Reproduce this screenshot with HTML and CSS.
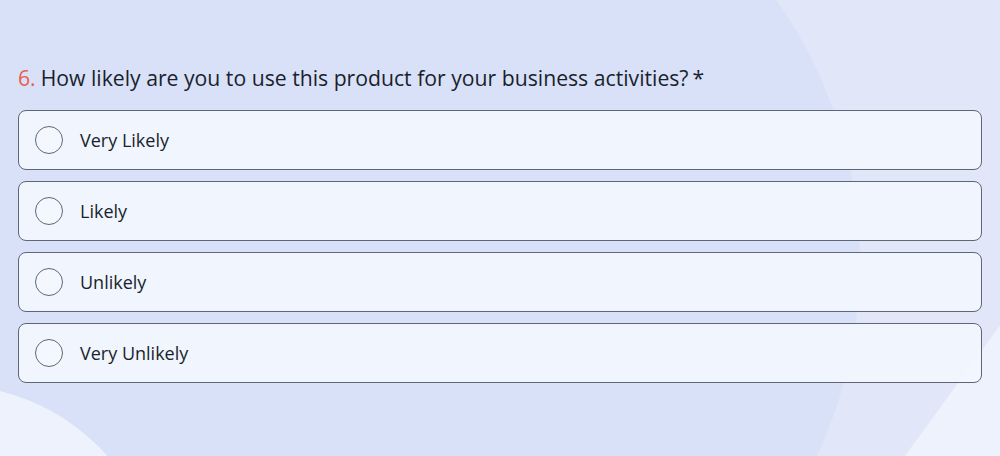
FILE: index.html
```html
<!DOCTYPE html>
<html lang="en">
<head>
    <meta charset="UTF-8">
    <meta name="viewport" content="width=device-width, initial-scale=1.0">
    <title>Survey</title>
    <link rel="stylesheet" href="styles.css">
</head>
<body>
    <div class="page">
        <div class="bg-shape blob-left"></div>
        <div class="bg-shape blob-right"></div>

        <div class="question">
            <h2 class="question-title"><span class="num">6.</span>How likely are you to use this product for your business activities?<span class="req">*</span></h2>
            <div class="options">
                <label class="option"><span class="radio"></span>Very Likely</label>
                <label class="option"><span class="radio"></span>Likely</label>
                <label class="option"><span class="radio"></span>Unlikely</label>
                <label class="option"><span class="radio"></span>Very Unlikely</label>
            </div>
        </div>
    </div>
</body>
</html>
```

FILE: styles.css
```css
html, body {
    margin: 0;
    overflow: hidden;
}
body {
    font-family: "Open Sans", "Noto Sans", sans-serif;
    color: #1a1f2c;
}
.page {
    position: relative;
    width: 1000px;
    height: 456px;
    overflow: hidden;
    background:
        linear-gradient(to right, #d9e1f8 0, #d9e1f8 403px, transparent 403px),
        radial-gradient(circle 457px at 403px 263px, #d9e1f8 456px, #e1e7f9 457.5px);
}
.bg-shape {
    position: absolute;
    pointer-events: none;
}
.blob-left {
    left: -260px;
    top: 385px;
    width: 420px;
    height: 420px;
    border-radius: 50%;
    background: #eef2fc;
}
.blob-right {
    left: 905px;
    top: 320px;
    width: 400px;
    height: 400px;
    background: #eef2fc;
    transform-origin: 0 100%;
    transform: translateY(-264px) rotate(36deg);
}
.question {
    position: relative;
    padding: 62px 18px 0 18px;
}
.question-title {
    margin: 0 0 16px 0;
    font-size: 21.2px;
    font-weight: 400;
    line-height: 32px;
}
.num {
    color: #e8604c;
    margin-right: 5px;
}
.req {
    margin-left: 4px;
}
.options {
    display: flex;
    flex-direction: column;
    gap: 11px;
}
.option {
    display: flex;
    align-items: center;
    height: 58px;
    border: 1px solid #5f6677;
    border-radius: 8px;
    background: rgba(242, 246, 254, 0.92);
    font-size: 18px;
    cursor: pointer;
}
.radio {
    width: 26px;
    height: 26px;
    border: 1.5px solid #5f6677;
    border-radius: 50%;
    margin: 0 17px 0 16px;
    background: #f4f7fe;
}
```
